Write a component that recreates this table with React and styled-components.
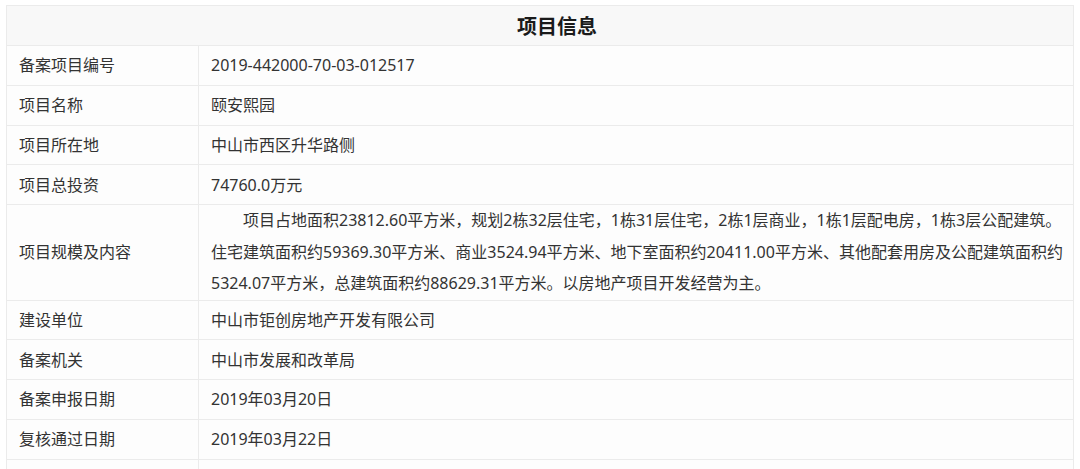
import React from 'react';
import styled, { createGlobalStyle } from 'styled-components';

const rows = [
  ['备案项目编号', '2019-442000-70-03-012517'],
  ['项目名称', '颐安熙园'],
  ['项目所在地', '中山市西区升华路侧'],
  ['项目总投资', '74760.0万元'],
  [
    '项目规模及内容',
    <>
      项目占地面积23812.60平方米，规划2栋32层住宅，1栋31层住宅，2栋1层商业，1栋1层配电房，1栋3层公配建筑。
      <br />
      住宅建筑面积约59369.30平方米、商业3524.94平方米、地下室面积约20411.00平方米、其他配套用房及公配建筑面积约5324.07平方米，总建筑面积约88629.31平方米。以房地产项目开发经营为主。
    </>,
    true,
  ],
  ['建设单位', '中山市钜创房地产开发有限公司'],
  ['备案机关', '中山市发展和改革局'],
  ['备案申报日期', '2019年03月20日'],
  ['复核通过日期', '2019年03月22日'],
  ['', ''],
];

const App = () => {
  return (
    <>
      <GlobalStyle />
      <Page>
        <InfoTable>
          <colgroup>
            <col style={{ width: 192 }} />
            <col />
          </colgroup>
          <thead>
            <tr>
              <Title colSpan={2}>项目信息</Title>
            </tr>
          </thead>
          <tbody>
            {rows.map(([label, value, long], i) => (
              <tr key={i}>
                <Label>{label}</Label>
                <Value $long={long}>{value}</Value>
              </tr>
            ))}
          </tbody>
        </InfoTable>
      </Page>
    </>
  );
};

const GlobalStyle = createGlobalStyle`
  body {
    margin: 0;
    background: #fff;
    font-family: "Noto Sans", "Noto Sans CJK SC", sans-serif;
    color: #333;
  }
`;

const Page = styled.div`
  padding: 5px 6px 0 6px;
  width: 1068px;
  height: 469px;
  overflow: hidden;
`;

const InfoTable = styled.table`
  width: 1068px;
  border-collapse: collapse;
  table-layout: fixed;
  font-size: 16px;
`;

const Title = styled.th`
  height: 39px;
  padding: 0 0 0 34px;
  background: #f8f8f8;
  border: 1px solid #ebebeb;
  font-family: "Noto Sans CJK SC", sans-serif;
  font-size: 20px;
  font-weight: 700;
  color: #1a1a1a;
  text-align: center;
  line-height: 39px;
`;

const Label = styled.td`
  height: 38.75px;
  padding: 0 12px;
  border: 1px solid #ebebeb;
  background: #fdfdfd;
  line-height: 32px;
  vertical-align: middle;
  white-space: nowrap;
`;

const Value = styled.td`
  height: 38.75px;
  padding: 0 4px 0 12px;
  border: 1px solid #ebebeb;
  background: #fdfdfd;
  line-height: ${(p) => (p.$long ? '31.5px' : '32px')};
  text-indent: ${(p) => (p.$long ? '2em' : '0')};
  vertical-align: middle;
`;

export default App;
